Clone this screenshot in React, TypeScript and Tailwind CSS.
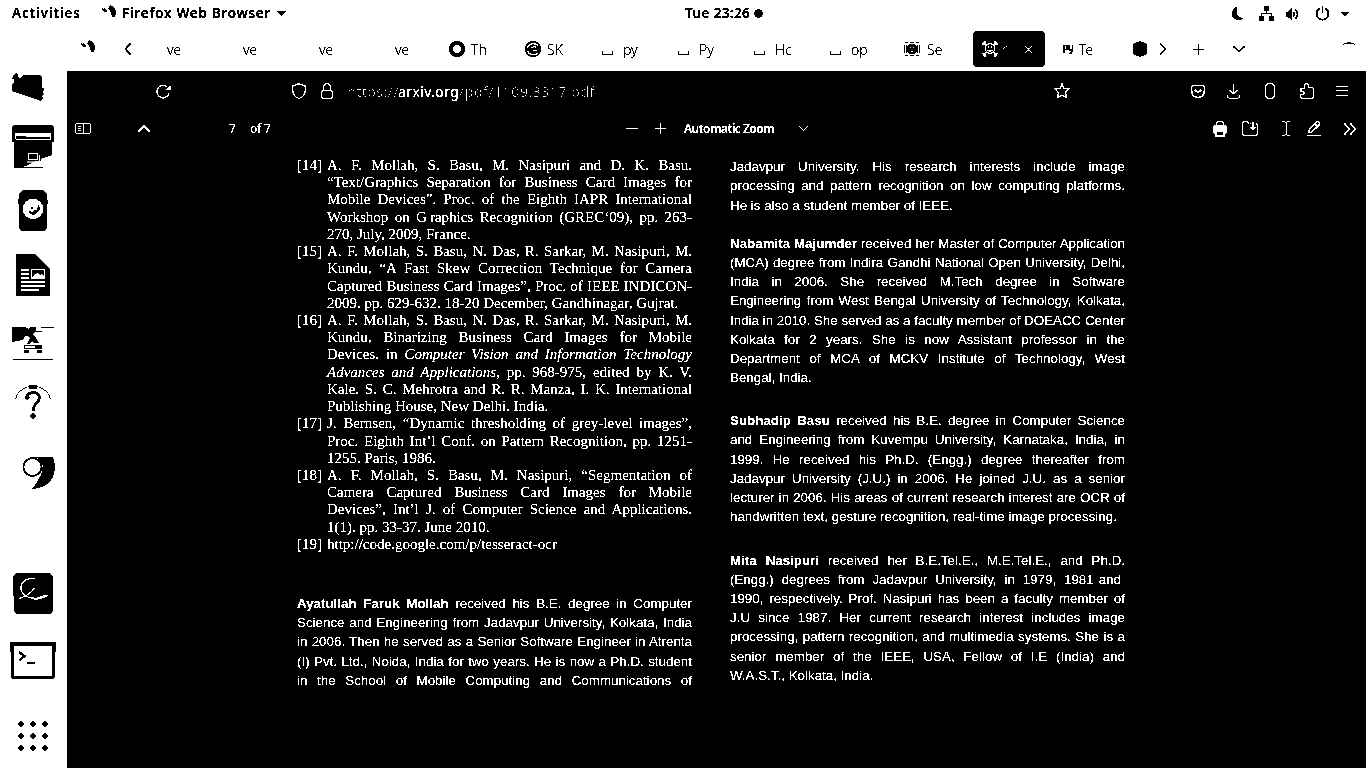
import type { ReactNode } from 'react';

const ui = "font-['Noto_Sans','Open_Sans',sans-serif]";

/* Stroke-based icon; size comes from the class, strokes use currentColor. */
function Icon({ box, className, children, sw = 1.3 }: { box: string; className: string; children: ReactNode; sw?: number }) {
  return (
    <svg viewBox={box} className={`shrink-0 ${className}`} fill="none" stroke="currentColor" strokeWidth={sw}>
      {children}
    </svg>
  );
}

function FirefoxMark({ className }: { className: string }) {
  return (
    <Icon box="0 0 15 13" className={`h-[13px] w-[15px] ${className}`}>
      <path fill="currentColor" stroke="none" d="M0 3H1V4H2V3H3V4H4V5H5V7H2V6H1V5H0ZM7 1H8V0H9V1H11V2H12V3H13V5H14V10H13V12H10V10H9V7H8V5H7V4H6V3H7Z" />
    </Icon>
  );
}

function TopBar() {
  return (
    <header className={`flex h-[27px] shrink-0 items-center bg-white pl-3 text-[13.5px] font-semibold text-black brightness-75 contrast-[50] ${ui}`}>
      <span className="w-[68px] whitespace-nowrap tracking-[0.85px]">Activities</span>
      <FirefoxMark className="ml-[22px] -mt-1" />
      <span className="ml-[5px] w-[149px] whitespace-nowrap tracking-[0.72px]">Firefox Web Browser</span>
      <Icon box="0 0 9 5" className="ml-[6px] h-[5px] w-[9px]"><path fill="currentColor" stroke="none" d="M0 0H9L4.500 5Z" /></Icon>
      <span className="ml-[399px] w-[65px] whitespace-nowrap tracking-[0.4px]">Tue 23:26</span>
      <Icon box="0 0 9 9" className="ml-[4px] size-[9px]"><circle cx="4.5" cy="4.500" r="4" fill="currentColor" stroke="none" /></Icon>
      <Icon box="0 0 12 13" className="ml-[469px] h-[13px] w-[12px]"><path fill="currentColor" stroke="none" d="M4 0C1 2 0 4 0 7C0 11 4 13 7 13C9 13 10 12 11 11C6 11 3 6 5 0Z" /></Icon>
      <Icon box="0 0 15 15" className="ml-[15px] size-[15px]">
        <path fill="currentColor" stroke="none" d="M5 0h5v5H5zM0 10h5v5H0zM10 10h5v5h-5z" />
        <path strokeWidth="1" d="M7.500 5V7.500M2.500 10V7.500H12.500V10" />
      </Icon>
      <Icon box="0 0 13 12" className="ml-[12px] h-[12px] w-[13px]">
        <path fill="currentColor" stroke="none" d="M0 4H2L6 0V12L2 9H0Z" />
        <path d="M7.500 4Q9 6 7.500 8.500M9.500 1.500Q13.500 6 9.500 11" />
      </Icon>
      <Icon box="0 0 15 15" className="ml-[16px] size-[15px]" sw={1.6}><path d="M4.500 2.500A6 6 0 1 0 10.500 2.500M7.500 0V7" /></Icon>
      <Icon box="0 0 8 4" className="ml-[11px] h-[4px] w-[8px]"><path fill="currentColor" stroke="none" d="M0 0H8V1H7V2H6V3H5V4H3V3H2V2H1V1H0Z" /></Icon>
    </header>
  );
}

const slotIcons: { y: number; art: ReactNode }[] = [
  { y: 55, art: <path d="M13 76L14 75L16 73L18 74L18 77L20 78L23 75.500L28 74.500L40 75L42 77V88L44 88L43 93L44 94L42 96L43 98L41 101L38 100L12 91V85L14 82V79L12 79Z" /> },
  { y: 119, art: (
    <>
      <path d="M14 125H52L54 127V142H52V155L41 159V161L35 162L23 167H43V168H14V142H12V127Z" />
      <path fill="#fff" d="M15 133H51V140H15Z" />
      <path d="M16 136H26V137H50V139H16ZM15 139h1v1h-1z" />
      <path fill="none" stroke="#fff" strokeWidth="1.200" d="M28.500 153.500H37.500V159.500H28.500ZM27 162H39.500V155" />
    </>
  ) },
  { y: 183, art: (
    <>
      <path d="M23 190H43L47 194V199L48 201V203L47 205V228L44 231H22L19 228V205L18 203V200L19 198V194Z" />
      <circle cx="33" cy="209" r="10.200" fill="#fff" />
      <path d="M31 207h2v2h-2zM38 205H39L40 209L36 214L33 215L29 213V211L33 212L34 210H37Z" />
    </>
  ) },
  { y: 247, art: (
    <>
      <path d="M16 254H35L50 269V296H16Z" />
      <path fill="#fff" d="M21 269h8v2h-8zM21 273h8v2h-8zM21 277h8v2h-8zM31 269h14v10h-14zM21 281h24v2h-24zM21 285h24v2h-24zM21 289h18v2h-18z" />
      <path d="M32 270H44V276L42 274L40 275L38 273L35 274L32 277Z" />
    </>
  ) },
  { y: 311, art: (
    <>
      <path d="M12 327H25L29 329L30 327H36V330L35 331H42V332L35 332L33 334L36 338L39 343H34L32 341L30 344H27L30 338L28 336H25L23 340L12 342ZM41 327h13v1h-13zM24 345h18v4h-18zM24 350h5v3h-5zM37 350h5v3h-5zM13 359h40v1h-40z" />
      <path fill="#fff" d="M25 346h10v2h-10z" />
    </>
  ) },
  { y: 375, art: (
    <>
      <path fill="none" stroke="#000" strokeWidth="1" d="M15.500 399C20 382 46 382 50.500 399" />
      <path d="M29 385H37V389H29Z" />
      <path fill="none" stroke="#000" strokeWidth="2.800" d="M27 399C25 391 40 390 39.500 398C39 403 33 403 33 411" />
      <circle cx="27.500" cy="397.500" r="2.300" />
      <circle cx="33" cy="416" r="2.700" />
    </>
  ) },
  { y: 439, art: (
    <>
      <path d="M32 457H53C58 470 54 488 32 489C36 484 38 480 41 475L43 466L38 458Z" />
      <circle cx="32.500" cy="467" r="9" fill="#fff" stroke="#000" strokeWidth="1.800" />
    </>
  ) },
];

const lowerIcons: { y: number; art: ReactNode }[] = [
  { y: 561, art: (
    <>
      <path d="M16 573H50L53 576V611L50 614H17L14 611V596H13V576Z" />
      <path fill="none" stroke="#fff" strokeWidth="1.300" d="M35 579C26 576 18 585 22 592C25 597 29 598 34 597.500M19 598.500C25 597 31 593 34.500 588" />
      <path fill="#fff" d="M27 597L34 598C39 598 43 594 49 595C45 598 38 601 32 599Z" />
    </>
  ) },
  { y: 625, art: (
    <>
      <path d="M10 642H56V652H55V677L53 679H12L11 677V652H10Z" />
      <path fill="#fff" d="M14 646h38v30h-38z" />
      <path fill="none" stroke="#000" strokeWidth="2.300" d="M19 652L24.500 656L19.500 660.500M27 663H35" />
    </>
  ) },
];

function Dock() {
  return (
    <nav className="flex w-[67px] shrink-0 flex-col bg-white pt-7 contrast-[50]">
      {slotIcons.map((s) => (
        <svg key={s.y} viewBox={`0 ${s.y} 67 64`} className="h-16 w-[67px] shrink-0" fill="#000">{s.art}</svg>
      ))}
      <div className="h-[58px] shrink-0" />
      {lowerIcons.map((s) => (
        <svg key={s.y} viewBox={`0 ${s.y} 67 64`} className="h-16 w-[67px] shrink-0" fill="#000">{s.art}</svg>
      ))}
      <div className="mt-8 ml-[18px] grid w-[30px] grid-cols-3 gap-[6px]">
        {Array.from({ length: 9 }, (_, i) => (
          <svg key={i} viewBox="0 0 6 6" className="size-[6px]"><path d="M2 0H4V1H5V2H6V4H5V5H4V6H2V5H1V4H0V2H1V1H2Z" /></svg>
        ))}
      </div>
    </nav>
  );
}

const bracket = <Icon box="0 0 12 16" className="ml-[9px] h-4 w-3" sw={1}><path d="M.5 10V13.500H10.500V10" /></Icon>;

const tabs: { text: string; icon?: ReactNode }[] = [
  { text: 've' }, { text: 've' }, { text: 've' }, { text: 've' },
  { text: 'Th', icon: <Icon box="0 0 16 16" className="ml-[8px] size-4" sw={4}><circle cx="8" cy="8" r="6" /></Icon> },
  { text: 'SK', icon: (
    <Icon box="0 0 16 16" className="ml-[8px] size-4">
      <circle cx="8" cy="8" r="8" fill="currentColor" stroke="none" />
      <path stroke="#fff" strokeWidth="1.500" d="M13 4.500C10 1.500 3 2 2.500 7.500M13 12C10 14.500 4 14.500 2.500 9.500M11.500 6.500C10 5 7 5.500 6.500 7.500M12.500 9.500H8" />
    </Icon>
  ) },
  { text: 'py', icon: bracket }, { text: 'Py', icon: bracket }, { text: 'Hc', icon: bracket }, { text: 'op', icon: bracket },
  { text: 'Se', icon: (
    <Icon box="0 0 16 14" className="ml-[7px] h-[14px] w-4" sw={1}>
      <path d="M.5 3V11M2.500 3V11M15.500 3V11M13.500 3V11M1 .5H4M12 .5H15M1 13.500H4M12 13.500H15M6 .5H10M6 13.500H10" />
      <circle cx="8" cy="7" r="4.800" fill="currentColor" />
      <path stroke="#fff" d="M6.500 4.500V6.500M9.500 4.500V6.500M5.500 8.500Q8 11 10.500 8.500" />
    </Icon>
  ) },
];

function ArxivIcon() {
  return (
    <Icon box="0 0 16 16" className="ml-[9px] size-4" sw={1.5}>
      <circle cx="8" cy="7.500" r="4.700" />
      <path d="M1 1L4.500 4.500M0 3L3 3M3 0V3M11.500 4.500L15 1M13 0V3M13 3H16M4.500 11L1 14.500M0 12.500H3M3 13V16M11.500 11L15 14.500M13 12.500H16M13 13V16M6.500 5V7M9.500 5V7M5.500 9Q8 11 10.500 9" />
    </Icon>
  );
}

function TabStrip() {
  const label = 'absolute left-[30px] top-[8px] whitespace-nowrap font-light';
  return (
    <div className={`flex h-[44px] shrink-0 items-center bg-white text-[14px] text-black brightness-[.8] contrast-[50] ${ui}`}>
      <FirefoxMark className="ml-[14px] -mt-[5px]" />
      <Icon box="0 0 8 12" className="ml-[28px] h-3 w-2" sw={1.2}><path d="M6.500 .5L1 6L6.500 11.500" /></Icon>
      <div className="w-[5px] shrink-0" />
      {tabs.map((t, i) => (
        <div key={i} className="relative flex h-9 w-[76px] shrink-0 items-center">
          {t.icon}
          <span className={label}>{t.text}</span>
        </div>
      ))}
      <div className="flex h-9 w-[72px] shrink-0 items-center rounded bg-black text-white">
        <ArxivIcon />
        <Icon box="0 0 4 3" className="ml-[5px] -mt-1 h-[3px] w-1" sw={1}><path d="M0 2.500H1M1 1.500H2M3 .5H4" /></Icon>
        <Icon box="0 0 9 9" className="ml-[17px] size-[9px]" sw={1.2}><path d="M.5 .5L8.500 8.500M8.500 .5L.5 8.500" /></Icon>
      </div>
      <div className="relative ml-1 flex h-9 w-[76px] shrink-0 items-center">
        <Icon box="0 0 11 11" className="ml-[14px] h-[11px] w-[11px]" sw={1.6}><path d="M1 9V1M1 1.500H4V5.500H2M6 1V5.500L9.500 6V1M9.500 6L8 9.500H6.500" /></Icon>
        <span className="absolute left-[30px] top-[8px] font-light">Te</span>
      </div>
      <Icon box="0 0 14 16" className="ml-[8px] h-4 w-[14px]"><path fill="currentColor" stroke="none" d="M7 0L14 3V13L7 16L0 13V3Z" /></Icon>
      <Icon box="0 0 8 12" className="ml-[12px] h-3 w-2" sw={1.2}><path d="M1 .5L6.500 6L1 11.500" /></Icon>
      <Icon box="0 0 11 11" className="ml-[26px] size-[11px]" sw={1}><path d="M5.500 0V11M0 5.500H11" /></Icon>
      <Icon box="0 0 12 7" className="ml-[29px] h-[7px] w-3" sw={1.2}><path d="M.5 .5L6 6L11.500 .5" /></Icon>
      <Icon box="0 0 12 4" className="ml-[98px] -mt-[12px] h-1 w-3"><path fill="currentColor" stroke="none" d="M0 4V3H1V2H4V1H8V2H11V3H12V4H11V3H1V4Z" /></Icon>
    </div>
  );
}

function NavBar() {
  return (
    <div className={`flex h-[40px] shrink-0 items-center text-[14px] ${ui}`}>
      <Icon box="0 0 15 15" className="ml-[89px] size-[15px]" sw={1.2}>
        <path d="M13 9.500A6.200 6.200 0 1 1 11 2.800" /><path fill="currentColor" stroke="none" d="M14.500 1V6H9.500Z" />
      </Icon>
      <Icon box="0 0 14 16" className="ml-[121px] h-4 w-[14px]" sw={1.1}><path d="M7 .7L13.300 3V7C13.300 11 11 14 7 15.500C3 14 .7 11 .7 7V3Z" /></Icon>
      <Icon box="0 0 12 16" className="ml-[15px] h-4 w-3" sw={1.2}><path d="M2.500 7.500V4.500Q2.500 .6 6 .6Q9.500 .6 9.500 4.500V7.500M1.600 7.500H10.400L11.400 8.500V14.400L10.400 15.400H1.600L.6 14.400V8.500Z" /></Icon>
      <div className="ml-[14px] flex w-[250px] whitespace-nowrap text-[#707070]">
        <span className="w-[51px] tracking-[0.5px]">https://</span>
        <span className="w-[61px] tracking-[0.4px] text-white">arxiv.org</span>
        <span className="tracking-[0.55px]">/pdf/1109.3317.pdf</span>
      </div>
      <Icon box="0 0 16 16" className="ml-[457px] size-4" sw={1.2}><path d="M8 1L10 5.500L15 6L11.500 9.500L12.500 14.500L8 12.200L3.500 14.500L4.500 9.500L1 6L6 5.500Z" /></Icon>
      <Icon box="0 0 14 13" className="ml-[121px] h-[13px] w-[14px]" sw={1.3}><path d="M1.700 .7H12.300L13.300 1.700V6C13.300 10 11 12.300 7 12.300C3 12.300 .7 10 .7 6V1.700Z" /><path strokeWidth="1.800" d="M3.800 4.500L7 7.500L10.200 4.500" /></Icon>
      <Icon box="0 0 13 15" className="ml-[22px] h-[15px] w-[13px]" sw={1}><path d="M6.500 0V10M2 5.500L6.500 10L11 5.500M.5 11.500V13L2 14.500H11L12.500 13V11.500" /></Icon>
      <Icon box="0 0 10 16" className="ml-[25px] h-4 w-[10px]" sw={1.1}><rect x=".6" y=".6" width="8.800" height="14.800" rx="3.500" /></Icon>
      <Icon box="0 0 14 16" className="ml-[25px] h-4 w-[14px]" sw={1.2}><path d="M1 5.500H4.500V2Q6.500 -.8 8.500 2V4.500H12Q13.400 4.500 13.400 6V14Q13.400 15.400 12 15.400H2Q.6 15.400 .6 14V11.500H3Q5 10 3 8.500H1Z" /></Icon>
      <Icon box="0 0 12 10" className="ml-[22px] h-[10px] w-3" sw={1}><path d="M0 .5H12M0 4.500H12M0 9.500H12" /></Icon>
    </div>
  );
}

function PdfToolbar() {
  return (
    <div className={`flex h-[35px] shrink-0 items-center text-[12px] ${ui}`}>
      <Icon box="0 0 16 11" className="ml-[8px] h-[11px] w-4" sw={1}><path d="M1.500 .5H14.500L15.500 1.500V9.500L14.500 10.500H1.500L.5 9.500V1.500ZM8.500 .5V10.500M3 3.500H5.500M3 5.500H5.500M3 7.500H5.500" /></Icon>
      <Icon box="0 0 12 7" className="ml-[47px] h-[7px] w-3" sw={1.3}><path d="M.5 6.500L6 1L11.500 6.500" /></Icon>
      <span className="ml-[79px] w-[21px] shrink-0">7</span>
      <span className="w-[22px] shrink-0 whitespace-nowrap tracking-[-0.2px]">of 7</span>
      <Icon box="0 0 12 1" className="ml-[354px] h-px w-3" sw={1}><path d="M0 .5H12" /></Icon>
      <Icon box="0 0 11 11" className="ml-[17px] size-[11px]" sw={1}><path d="M5.500 0V11M0 5.500H11" /></Icon>
      <span className="ml-[18px] w-[92px] shrink-0 whitespace-nowrap font-semibold tracking-[-0.5px]">Automatic Zoom</span>
      <Icon box="0 0 9 5" className="ml-[23px] h-[5px] w-[9px]" sw={1}><path d="M.5 .5L4.500 4.500L8.500 .5" /></Icon>
      <Icon box="0 0 14 16" className="ml-[405px] h-4 w-[14px]" sw={1.2}>
        <path d="M3.500 5V2L5 .6H9L10.500 2V5" />
        <path fill="currentColor" stroke="none" d="M1 4.500H13L14 6V12L12 13V15L11 16H3L2 15V13L0 12V6Z" />
        <path fill="#000" stroke="none" d="M4 10.500H10V14.500H4ZM11 6.500h1v1h-1z" />
      </Icon>
      <Icon box="0 0 17 15" className="ml-[15px] h-[15px] w-[17px]" sw={1.1}><path d="M7 2.500L5.500 .6H2L.6 2V13L2 14.400H14L15.400 13V4L14 2.500M8 2.500H9" /><path strokeWidth="1.600" d="M11 1V8.500M8.500 6L11 8.500L13.500 6" /></Icon>
      <Icon box="0 0 8 15" className="ml-[23px] h-[15px] w-2" sw={1}><path d="M0 .5H3L4 1.500L5 .5H8M4.500 1V14M0 14.500H3L4 13.500L5 14.500H8" /></Icon>
      <Icon box="0 0 14 15" className="ml-[17px] h-[15px] w-[14px]" sw={1.3}><path d="M1.500 11.500L2.500 8L9.500 1Q11 0 12 1.500Q13 2.800 12 4L5 11L1.500 11.800M8 3L10.500 5.500M0 14.400H14" /></Icon>
      <Icon box="0 0 12 12" className="ml-[23px] h-3 w-3" sw={1.4}><path d="M.5 .5L5.500 6L.5 11.500M6.500 .5L11.500 6L6.500 11.500" /></Icon>
    </div>
  );
}

/* One typeset line; `end` marks the last, unstretched line of a paragraph. */
function Line({ children, end, className }: { children: ReactNode; end?: boolean; className: string }) {
  return <div className={`whitespace-nowrap ${end ? '' : '[text-align-last:justify]'} ${className}`}>{children}</div>;
}

const references: { n: number; lines: ReactNode[] }[] = [
  { n: 14, lines: ['A. F. Mollah, S. Basu, M. Nasipuri and D. K. Basu.', '“Text/Graphics Separation for Business Card Images for', 'Mobile Devices”. Proc. of the Eighth IAPR International', <>Workshop on <span className="mr-[3px]">G</span>raphics Recognition (GREC‘09), pp. 263-</>, '270, July, 2009, France.'] },
  { n: 15, lines: ['A. F. Mollah, S. Basu, N. Das, R. Sarkar, M. Nasipuri, M.', 'Kundu, “A Fast Skew Correction Technique for Camera', 'Captured Business Card Images”, Proc. of IEEE INDICON-', '2009. pp. 629-632. 18-20 December, Gandhinagar, Gujrat.'] },
  { n: 16, lines: ['A. F. Mollah, S. Basu, N. Das, R. Sarkar, M. Nasipuri, M.', 'Kundu, Binarizing Business Card Images for Mobile', <>Devices. in <i>Computer Vision and Information Technology</i></>, <><i>Advances and Applications</i>, pp. 968-975, edited by K. V.</>, 'Kale. S. C. Mehrotra and R. R. Manza, I. K. International', 'Publishing House, New Delhi. India.'] },
  { n: 17, lines: ['J. Bernsen, “Dynamic thresholding of grey-level images”,', 'Proc. Eighth Int’l Conf. on Pattern Recognition, pp. 1251-', '1255. Paris, 1986.'] },
  { n: 18, lines: ['A. F. Mollah, S. Basu, M. Nasipuri, “Segmentation of', 'Camera Captured Business Card Images for Mobile', 'Devices”, Int’l J. of Computer Science and Applications.', '1(1). pp. 33-37. June 2010.'] },
  { n: 19, lines: ['http://code.google.com/p/tesseract-ocr'] },
];

type Bio = { name?: string; lines: ReactNode[]; open?: boolean; gap: string };

const leftBio: Bio = { name: 'Ayatullah Faruk Mollah', open: true, gap: 'mt-[41px]', lines: [' received his B.E. degree in Computer', 'Science and Engineering from Jadavpur University, Kolkata, India', 'in 2006. Then he served as a Senior Software Engineer in Atrenta', '(I) Pvt. Ltd., Noida, India for two years. He is now a Ph.D. student', 'in the School of Mobile Computing and Communications of'] };

const rightBios: Bio[] = [
  { gap: '', lines: ['Jadavpur University. His research interests include image', 'processing and pattern recognition on low computing platforms.', 'He is also a student member of IEEE.'] },
  { name: 'Nabamita Majumder', gap: 'mt-[19px]', lines: [' received her Master of Computer Application', '(MCA) degree from Indira Gandhi National Open University, Delhi,', 'India in 2006. She received M.Tech degree in Software', 'Engineering from West Bengal University of Technology, Kolkata,', 'India in 2010. She served as a faculty member of DOEACC Center', 'Kolkata for 2 years. She is now Assistant professor in the', 'Department of MCA of MCKV Institute of Technology, West', 'Bengal, India.'] },
  { name: 'Subhadip Basu', gap: 'mt-[24px]', lines: [' received his B.E. degree in Computer Science', 'and Engineering from Kuvempu University, Karnataka, India, in', '1999. He received his Ph.D. (Engg.) degree thereafter from', 'Jadavpur University (J.U.) in 2006. He joined J.U. as a senior', 'lecturer in 2006. His areas of current research interest are OCR of', 'handwritten text, gesture recognition, real-time image processing.'] },
  { name: 'Mita Nasipuri', gap: 'mt-[24.2px]', lines: [' received her B.E.Tel.E., M.E.Tel.E., and Ph.D.', <>(Engg.) degrees from Jadavpur University, in 1979, 1981<span className="mr-1 ml-[5px]">and</span></>, '1990, respectively. Prof. Nasipuri has been a faculty member of', 'J.U since 1987. Her current research interest includes image', 'processing, pattern recognition, and multimedia systems. She is a', 'senior member of the IEEE, USA, Fellow of I.E (India) and', 'W.A.S.T., Kolkata, India.'] },
];

function BioBlock({ bio }: { bio: Bio }) {
  return (
    <div className={`font-['Liberation_Sans',sans-serif] text-[13.36px] ${bio.gap}`}>
      {bio.lines.map((l, i) => (
        <Line key={i} end={!bio.open && i === bio.lines.length - 1} className="h-[19.2px] leading-[19.2px]">
          {i === 0 && bio.name ? <b>{bio.name}</b> : null}
          {l}
        </Line>
      ))}
    </div>
  );
}

function Page() {
  return (
    <main className="flex min-h-0 flex-1 items-start pl-[230px]">
      <section className="w-[395px] pt-[11px]">
        <div className="font-['Liberation_Serif',serif] text-[15px]">
          {references.map((r) => (
            <div key={r.n} className="flex">
              <span className="w-[30px] shrink-0 leading-[17.23px]">[{r.n}]</span>
              <div className="flex-1">
                {r.lines.map((l, i) => <Line key={i} end={i === r.lines.length - 1} className="h-[17.23px] leading-[17.23px]">{l}</Line>)}
              </div>
            </div>
          ))}
        </div>
        <BioBlock bio={leftBio} />
      </section>
      <section className="ml-[38px] w-[395px] pt-[11.2px]">
        {rightBios.map((b, i) => <BioBlock key={i} bio={b} />)}
      </section>
    </main>
  );
}

export default function App() {
  return (
    <div className="flex h-[768px] w-[1366px] flex-col overflow-hidden bg-white">
      <TopBar />
      <div className="flex min-h-0 flex-1">
        <Dock />
        <div className="flex min-w-0 flex-1 flex-col bg-black text-white">
          <TabStrip />
          <div className="flex min-h-0 flex-1 flex-col bg-black brightness-125 contrast-[50]">
            <NavBar />
            <PdfToolbar />
            <Page />
          </div>
        </div>
      </div>
    </div>
  );
}
